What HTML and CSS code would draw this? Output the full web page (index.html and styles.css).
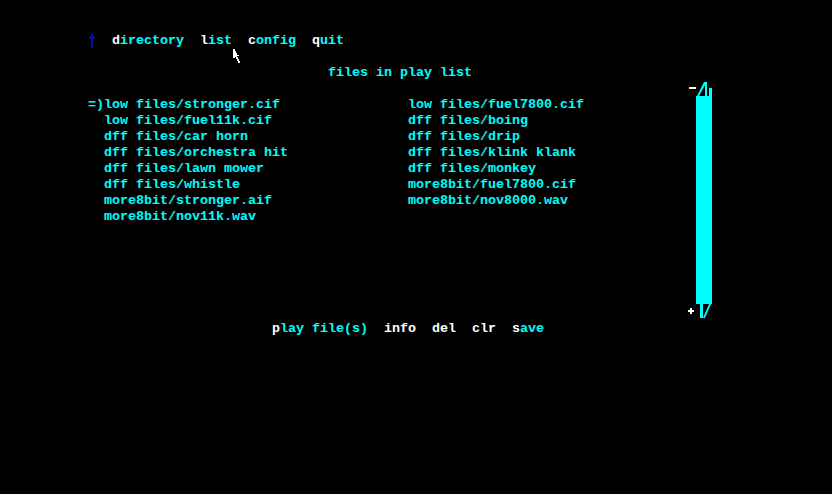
FILE: index.html
```html
<!DOCTYPE html>
<html>
<head>
<title>play list</title>
<link rel="stylesheet" href="styles.css">
</head>
<body>
<div class="screen">
	<div class="content">
		<!-- top menu -->
		<div class="line menu"><svg class="up" width="8" height="16" viewBox="0 0 8 16"><path d="M3 3h2v13h-2z M1 5h6v2h-6z M2 4h4v1h-4z M3 2h2v2h-2z" fill="#0c0c9c"/></svg>  <b>d</b>irectory  <b>l</b>ist  <b>c</b>onfig  <b>q</b>uit</div>
		<div class="line title">files in play list</div>

		<!-- play list files -->
		<div class="files">
			<div class="col">
				<div class="line">=)low files/stronger.cif</div>
				<div class="line">  low files/fuel11k.cif</div>
				<div class="line">  dff files/car horn</div>
				<div class="line">  dff files/orchestra hit</div>
				<div class="line">  dff files/lawn mower</div>
				<div class="line">  dff files/whistle</div>
				<div class="line">  more8bit/stronger.aif</div>
				<div class="line">  more8bit/nov11k.wav</div>
			</div>
			<div class="col">
				<div class="line">low files/fuel7800.cif</div>
				<div class="line">dff files/boing</div>
				<div class="line">dff files/drip</div>
				<div class="line">dff files/klink klank</div>
				<div class="line">dff files/monkey</div>
				<div class="line">more8bit/fuel7800.cif</div>
				<div class="line">more8bit/nov8000.wav</div>
			</div>
		</div>

		<!-- actions -->
		<div class="line actions"><b>p</b>lay file(s)  <b>info</b>  <b>del</b>  <b>clr</b>  <b>s</b>ave</div>
	</div>

	<!-- scroll bar -->
	<svg class="scroll" width="24" height="240" viewBox="0 0 24 240">
		<rect x="1" y="7" width="7" height="2" fill="#fff"/>
		<path d="M9 16 L16 2 H19 V16 Z" fill="#0ff"/>
		<path d="M11 16 L17 5 V16 Z" fill="#000"/>
		<rect x="8" y="16" width="16" height="208" fill="#0ff"/>
		<rect x="21" y="8" width="3" height="8" fill="#0ff"/>
		<rect x="12" y="224" width="3" height="14" fill="#0ff"/>
		<path d="M15 238 L21 224 H23 L17 238 Z" fill="#0ff"/>
		<rect x="0" y="230" width="6" height="2" fill="#fff"/>
		<rect x="2" y="228" width="2" height="6" fill="#fff"/>
	</svg>

	<!-- mouse pointer -->
	<svg class="pointer" width="10" height="15" viewBox="0 0 10 15">
		<path d="M0 0 H2 V9 H0 Z M2 2 H3 V8 H2 Z M3 4 H4 V8 H3 Z M4 6 H6 V7 H4 Z M3 8 H5 V10 H3 Z M4 10 H6 V12 H4 Z M5 12 H7 V14 H5 Z" fill="#fff"/>
	</svg>
</div>
</body>
</html>
```
FILE: styles.css
```css
body {
	margin: 0;
	background: #000;
}
.screen {
	position: relative;
	width: 832px;
	height: 494px;
	display: flex;
	align-items: flex-start;
	padding: 33px 0 0 88px;
	box-sizing: border-box;
	font-family: "Liberation Mono", monospace;
	font-weight: bold;
	font-size: 13.333px;
	color: #00ffff;
}
.content { width: 600px; }
.line {
	height: 16px;
	line-height: 16px;
	white-space: pre;
}
.line b { color: #fff; }
.up { vertical-align: top; margin-top: -1px; }
.title {
	margin-top: 16px;
	padding-left: 240px;
}
.files {
	display: grid;
	grid-template-columns: 320px 280px;
	margin-top: 16px;
	height: 224px;
}
.actions { padding-left: 184px; }
.scroll { margin-top: 47px; }
.pointer {
	position: absolute;
	left: 233px;
	top: 49px;
}
```
